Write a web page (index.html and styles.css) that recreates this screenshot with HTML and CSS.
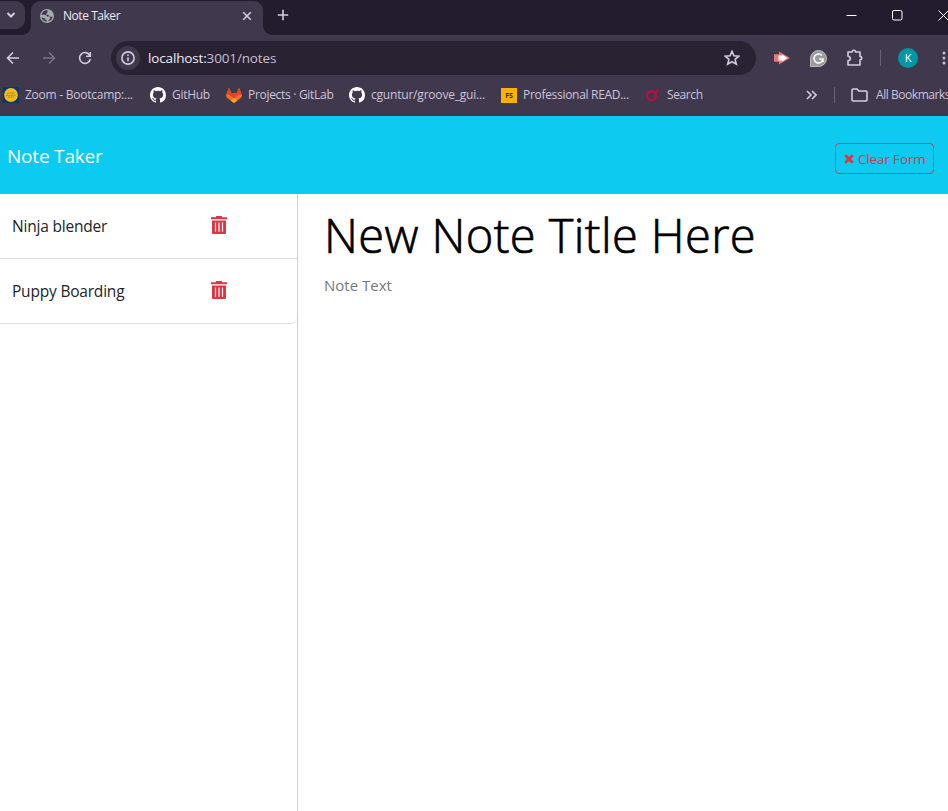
FILE: index.html
```html
<!DOCTYPE html>
<html lang="en">
<head>
<meta charset="utf-8">
<title>Note Taker</title>
<link rel="stylesheet" href="styles.css">
</head>
<body>
<svg class="defs" width="0" height="0" aria-hidden="true">
  <symbol id="github" viewBox="0 0 16 16"><path d="M8 0C3.58 0 0 3.58 0 8c0 3.54 2.29 6.53 5.47 7.59.4.07.55-.17.55-.38 0-.19-.01-.82-.01-1.49-2.01.37-2.53-.49-2.69-.94-.09-.23-.48-.94-.82-1.13-.28-.15-.68-.52-.01-.53.63-.01 1.08.58 1.23.82.72 1.21 1.87.87 2.33.66.07-.52.28-.87.51-1.07-1.78-.2-3.64-.89-3.64-3.95 0-.87.31-1.59.82-2.15-.08-.2-.36-1.02.08-2.12 0 0 .67-.21 2.2.82A7.6 7.6 0 0 1 8 3.87c.68 0 1.36.09 2 .26 1.53-1.04 2.2-.82 2.2-.82.44 1.1.16 1.92.08 2.12.51.56.82 1.27.82 2.15 0 3.07-1.87 3.75-3.65 3.95.29.25.54.73.54 1.48 0 1.07-.01 1.93-.01 2.2 0 .21.15.46.55.38A8.01 8.01 0 0 0 16 8c0-4.42-3.58-8-8-8z" fill="#fff"/></symbol>
  <symbol id="trash" viewBox="0 0 16 18"><path d="M0 1.2h4.6L5.3 0h5.4l.7 1.2H16v2H0zM1 4.6h14v12.2c0 .8-.4 1.2-1.2 1.2H2.200c-.8 0-1.200-.4-1.200-1.200zM3.900 6.500v9.200h1.200V6.500zm3.500 0v9.200h1.200V6.500zm3.500 0v9.200h1.200V6.500z" fill="#dc3545" fill-rule="evenodd"/></symbol>
</svg>

<header class="browser">
  <div class="tabstrip">
    <div class="tab-search"><svg width="10" height="10" viewBox="0 0 10 10"><path d="M1.500 3 5 6.500 8.500 3" class="line bold"/></svg></div>
    <div class="tab">
      <svg class="globe" width="14" height="14" viewBox="0 0 14 14"><circle cx="7" cy="7" r="7" fill="#a4a9ad"/><path d="M7.500 1.300C4.500 1 2 3 1.500 5.800h3.300c1.500 0 2 .7 2 1.800h2.100c1 0 1.500.8 1.300 1.700-.3 1.300-1.500 1.200-1.700 3 2.200-.6 3.700-2.400 4.100-4.600H10.500c-1.300 0-1.900-.7-1.900-1.900H6.300c-.3-2 1.800-1.500 1.200-4.500zM1.600 8.200c.5 2.400 2.500 4.300 5 4.500V11c-1.300 0-1.600-.7-1.600-1.500z" fill="#40384c"/></svg>
      <span class="tab-title">Note Taker</span>
      <svg class="tab-close" width="10" height="10" viewBox="0 0 10 10"><path d="m1.200 1.200 7.600 7.600m0-7.600L1.200 8.800" class="line"/></svg>
    </div>
    <svg class="new-tab" width="12" height="12" viewBox="0 0 12 12"><path d="M6 .8v10.400M.8 6h10.400" class="line"/></svg>
    <div class="window-controls">
      <svg width="11" height="11" viewBox="0 0 11 11"><path d="M.5 5.500h10" class="thin"/></svg>
      <svg width="11" height="11" viewBox="0 0 11 11"><rect x=".5" y=".5" width="9.500" height="9.500" rx="1.500" class="thin"/></svg>
      <svg width="11" height="11" viewBox="0 0 11 11"><path d="m.5.5 10 10m0-10-10 10" class="thin"/></svg>
    </div>
  </div>

  <div class="toolbar">
    <svg class="back" width="14" height="14" viewBox="0 0 14 14"><path d="M13 7H1.500M7 1.500 1.500 7 7 12.500" class="line"/></svg>
    <svg class="forward" width="14" height="14" viewBox="0 0 14 14"><path d="M1 7h11.500M7 1.500 12.500 7 7 12.500" class="line"/></svg>
    <svg class="reload" width="14" height="14" viewBox="0 0 14 14"><path d="M11.800 4.500A5.400 5.400 0 1 0 12.300 8M12.300 1v4.200H8" class="line"/></svg>
    <div class="address">
      <span class="info"><svg width="14" height="14" viewBox="0 0 14 14"><circle cx="7" cy="7" r="6.100" class="line"/><path d="M7 6.200v4M7 3.500V5" class="line"/></svg></span>
      <span class="url"><b>localhost:</b>3001/notes</span>
      <svg class="star" width="16" height="16" viewBox="0 0 16 16"><path d="m8 1.300 1.900 4.500 4.900.4-3.700 3.200 1.200 4.800L8 11.700l-4.300 2.500 1.200-4.800L1.200 6.200l4.900-.4z" class="line"/></svg>
    </div>
    <svg class="ext-arrow" width="16" height="14" viewBox="0 0 16 14"><path d="M0 3.200h5V.5L16 7 5 13.500v-2.700H0z" fill="#f07478"/><path d="M4.500 4.500H8V3.500L13.500 7 8 10.500v-1H4.500z" fill="#fff"/></svg>
    <svg class="ext-g" width="17" height="17" viewBox="0 0 17 17"><path d="M.5 16.500V8.500a8 8 0 1 1 8 8z" fill="#9b9b9b" stroke="#cfcfcf" stroke-width=".8"/><path d="M11.900 5.500A4.500 4.500 0 1 0 13 9H9.300M13 9v3" fill="none" stroke="#fff" stroke-width="1.500"/></svg>
    <svg class="puzzle" width="18" height="18" viewBox="0 0 18 18"><path d="M2 3h4.200a1.700 1.700 0 0 1 3.400 0H14v4.400a1.700 1.700 0 0 1 0 3.400V16H2v-4.200c3-.2 3-4.400 0-4.600z" class="line round"/></svg>
    <span class="divider"></span>
    <span class="avatar">K</span>
    <svg class="menu" width="4" height="14" viewBox="0 0 4 14"><g fill="#c9bfda"><circle cx="2" cy="2" r="1.500"/><circle cx="2" cy="7" r="1.500"/><circle cx="2" cy="12" r="1.500"/></g></svg>
  </div>

  <nav class="bookmarks">
    <div class="mark zoom"><svg width="16" height="16" viewBox="0 0 16 16"><path d="M0 0h16v16H0z" fill="#08386b"/><circle cx="8" cy="8" r="6.900" fill="#f6ba20"/><path d="M4 6.200h8M3 8.300h10M5 10h6" stroke="#a88326" stroke-width="1" stroke-dasharray="2 .5"/></svg><span>Zoom - Bootcamp:...</span></div>
    <div class="mark gh"><svg width="16" height="16"><use href="#github"/></svg><span>GitHub</span></div>
    <div class="mark lab"><svg width="16" height="16" viewBox="0 0 16 16"><path d="M2.900.7 5.300 6h5.400L13.100.7 15.700 7.500c.5 1.300 0 2.700-1 3.600L8 15.900l-6.700-4.800c-1-.9-1.500-2.300-1-3.600z" fill="#fc6d26"/><path d="M2.900.7 5.300 6h5.400L13.100.7l2.500 6.600c-1.600.2-3 .8-4.300 1.800L8 11.500 4.700 9.100C3.400 8.100 2 7.500.4 7.300z" fill="#e24329"/><path d="M4.700 13.500 8 11l3.300 2.500L8 15.900z" fill="#fca326"/></svg><span>Projects · GitLab</span></div>
    <div class="mark repo"><svg width="16" height="16"><use href="#github"/></svg><span>cguntur/groove_gui...</span></div>
    <div class="mark pro"><i class="fs">FS</i><span>Professional READ...</span></div>
    <div class="mark search"><svg width="16" height="16" viewBox="0 0 16 16"><circle cx="6.500" cy="8.700" r="4.400" fill="none" stroke="#b80f3d" stroke-width="2.400"/><path d="m9.500 5.500 3.500-2M11 3.500h3" fill="none" stroke="#b80f3d" stroke-width="1.600"/></svg><span>Search</span></div>
    <svg class="more" width="11" height="10" viewBox="0 0 11 10"><path d="m1 1 4 4-4 4M6 1l4 4-4 4" class="line"/></svg>
    <span class="divider"></span>
    <div class="mark all"><svg width="17" height="14" viewBox="0 0 17 14"><path d="M1 2.300c0-.8.4-1.300 1.200-1.300H6l1.800 2h7c.8 0 1.200.5 1.200 1.200v7.500c0 .8-.4 1.300-1.200 1.300H2.200C1.400 13 1 12.500 1 11.700z" class="line"/></svg><span>All Bookmarks</span></div>
  </nav>
</header>

<div class="navbar">
  <a class="brand">Note Taker</a>
  <button class="clear"><svg width="10" height="10" viewBox="0 0 10 10"><path d="m1.300 1.300 7.400 7.400m0-7.400L1.300 8.700" stroke="#dc3545" stroke-width="2.700"/></svg><span>Clear Form</span></button>
</div>

<main class="notes">
  <aside class="sidebar">
    <ul class="list">
      <li><span>Ninja blender</span><svg width="16" height="18"><use href="#trash"/></svg></li>
      <li><span>Puppy Boarding</span><svg width="16" height="18"><use href="#trash"/></svg></li>
    </ul>
  </aside>
  <section class="editor">
    <h1>New Note Title Here</h1>
    <p>Note Text</p>
  </section>
</main>
</body>
</html>
```
FILE: styles.css
```css
* { box-sizing: border-box; }
body {
  margin: 0;
  height: 811px;
  overflow: hidden;
  display: flex;
  flex-direction: column;
  background: #fff;
  font-family: "Open Sans", "Noto Sans", sans-serif;
  color: #212529;
}
svg { display: block; flex: none; }
.defs { position: absolute; }
.line { fill: none; stroke: #d3cbe0; stroke-width: 1.6; }
.bold { stroke-width: 2; }
.round { stroke-linejoin: round; }
.thin { fill: none; stroke: #fff; stroke-width: 1; }

.browser {
  height: 116px;
  flex: none;
  background: #40384c;
  color: #d3cbe0;
  font-size: 12px;
  white-space: nowrap;
}
.tabstrip {
  height: 35px;
  display: flex;
  align-items: flex-start;
  background: #231c2e;
}
.tab-search {
  width: 25px;
  height: 28px;
  margin-top: 1px;
  padding: 9px 0 0 6px;
  border-radius: 0 9px 9px 0;
  background: #40384c;
}
.tab {
  width: 232px;
  height: 34px;
  margin: 1px 0 0 6px;
  padding: 0 11px 5px 9px;
  display: flex;
  align-items: center;
  border-radius: 9px 9px 0 0;
  background: #40384c;
  color: #eeeaf5;
  position: relative;
}
.tab::before, .tab::after {
  content: "";
  position: absolute;
  bottom: 0;
  width: 9px;
  height: 9px;
}
.tab::before { left: -9px; background: radial-gradient(circle at 0 0, #231c2e 8.5px, #40384c 9px); }
.tab::after { right: -9px; background: radial-gradient(circle at 100% 0, #231c2e 8.5px, #40384c 9px); }
.tab-title { margin-left: 9px; letter-spacing: -.45px; }
.tab-close { margin-left: auto; }
.new-tab { margin: 9px 0 0 14px; }
.window-controls {
  margin: 10px -1px 0 auto;
  display: flex;
  gap: 35px;
}

.toolbar {
  height: 46px;
  display: flex;
  align-items: center;
  padding-left: 6px;
}
.forward { margin-left: 22px; opacity: .4; }
.reload { margin-left: 22px; }
.address {
  width: 645px;
  height: 34px;
  margin: 0 0 0 19px;
  padding: 0 16px 0 5px;
  display: flex;
  align-items: center;
  border-radius: 17px;
  background: #292233;
}
.info {
  width: 24px;
  height: 24px;
  display: grid;
  place-items: center;
  border-radius: 50%;
  background: #40384c;
}
.url { margin-left: 8px; font-size: 13.5px; letter-spacing: -.15px; color: #c6bed2; }
.url b { font-weight: 400; color: #eeeaf5; }
.star { margin-left: auto; }
.ext-arrow { margin-left: 18px; }
.ext-g { margin-left: 20px; }
.puzzle { margin-left: 19px; }
.divider { width: 1px; height: 16px; background: #6a6176; flex: none; }
.toolbar .divider { margin-left: 16px; }
.avatar {
  width: 20px;
  height: 20px;
  margin-left: 17px;
  border-radius: 50%;
  background: #0097a7;
  color: #fff;
  font-size: 11px;
  line-height: 20px;
  text-align: center;
  flex: none;
}
.menu { margin-left: 24px; }

.bookmarks {
  height: 28px;
  display: flex;
  align-items: center;
  padding-left: 3px;
}
.mark { display: flex; align-items: center; gap: 6px; flex: none; color: #cdc5d9; }
.mark span { margin-bottom: 2px; }
.zoom { width: 147px; letter-spacing: -.25px; }
.gh { width: 76px; letter-spacing: -.3px; }
.lab { width: 123px; letter-spacing: -.3px; }
.repo { width: 152px; letter-spacing: -.2px; }
.pro { width: 144px; letter-spacing: -.3px; }
.search { width: 161px; letter-spacing: -.4px; }
.fs {
  width: 16px;
  height: 15px;
  background: #ffb000;
  color: #332500;
  font-size: 7px;
  font-style: normal;
  font-weight: 700;
  line-height: 15px;
  text-align: center;
  letter-spacing: 0;
}
.bookmarks .divider { margin: 0 16px 0 17px; }
.all { gap: 8px; letter-spacing: -.45px; }

.navbar {
  height: 78px;
  flex: none;
  display: flex;
  justify-content: space-between;
  padding: 0 14px 0 7px;
  background: #0dcaf0;
}
.brand { margin-top: 25px; font-size: 19px; line-height: 30px; color: #fff; letter-spacing: -.2px; white-space: nowrap; }
.clear {
  width: 99px;
  height: 31px;
  margin-top: 27px;
  padding: 1px 0 0 8px;
  display: flex;
  align-items: center;
  gap: 4px;
  border: 1px solid #dc3545;
  border-radius: 4px;
  background: none;
  color: #dc3545;
  font: 400 13.5px "Open Sans", sans-serif;
  letter-spacing: -.15px;
  white-space: nowrap;
}

.notes { flex: 1; display: flex; }
.sidebar { width: 298px; border-right: 1px solid #ced0d2; }
.list { margin: 0; padding: 0; list-style: none; }
.list li {
  height: 65px;
  display: flex;
  align-items: center;
  padding: 0 70px 2px 12px;
  justify-content: space-between;
  border-bottom: 1px solid #dcdddf;
  font-size: 15.5px;
  letter-spacing: -.2px;
}
.list li:last-child { border-bottom-right-radius: 6px; }
.list span { margin-top: 2px; }
.editor { padding: 8px 0 0 26px; white-space: nowrap; }
.editor h1 {
  margin: 0;
  font-size: 47px;
  font-weight: 300;
  line-height: 66px;
  color: #000;
  letter-spacing: .4px;
  -webkit-text-stroke: .7px #000;
}
.editor p { margin: 5px 0 0; font-size: 15px; line-height: 24px; color: #75797e; }
```
